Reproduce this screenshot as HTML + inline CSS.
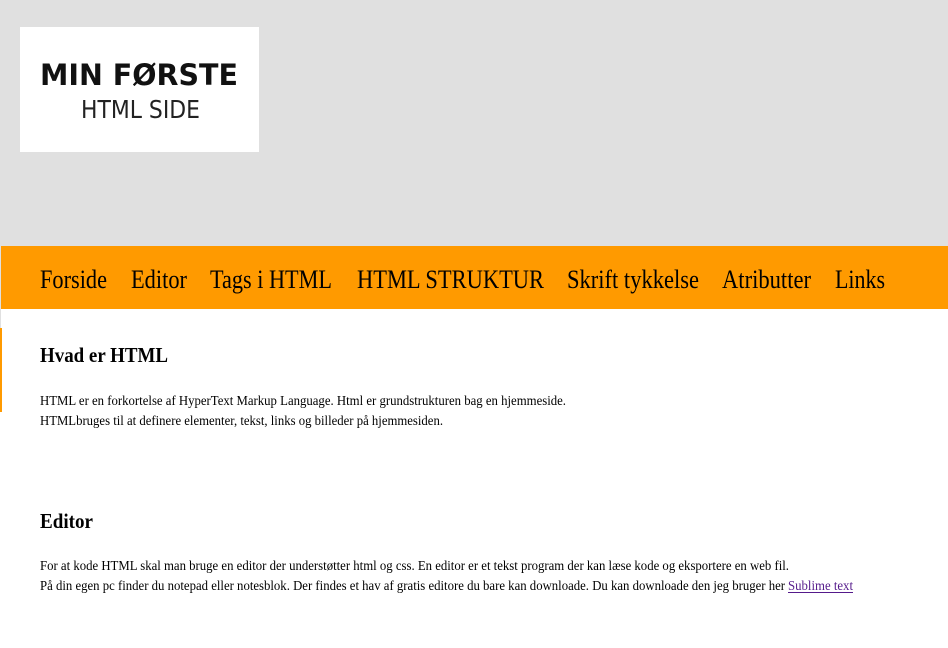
<!DOCTYPE html>
<html><head><meta charset="utf-8"><style>
html,body{margin:0;padding:0;width:948px;height:648px;overflow:hidden;background:#fff}
svg{display:block}
</style></head><body>
<svg width="948" height="648" xmlns="http://www.w3.org/2000/svg" font-family="'Liberation Serif', serif">
<rect x="0" y="0" width="948" height="246" fill="#e0e0e0"/>
<rect x="0" y="246" width="1" height="82" fill="#e0e0e0"/>
<rect x="20" y="27" width="239" height="125" fill="#fff"/>
<text x="40" y="85" font-family="'DejaVu Sans', sans-serif" font-weight="bold" font-size="29" textLength="198" lengthAdjust="spacingAndGlyphs" fill="#111">MIN FØRSTE</text>
<text x="81" y="118" font-family="'DejaVu Sans', sans-serif" font-size="25" textLength="119" lengthAdjust="spacingAndGlyphs" fill="#222">HTML SIDE</text>
<rect x="1" y="246" width="947" height="63" fill="#ff9a00"/>
<rect x="0" y="328" width="2" height="84" fill="#ff9a00"/>
<g font-size="26" fill="#000">
<text x="40" y="288" textLength="67" lengthAdjust="spacingAndGlyphs">Forside</text>
<text x="131" y="288" textLength="56" lengthAdjust="spacingAndGlyphs">Editor</text>
<text x="210" y="288" textLength="122" lengthAdjust="spacingAndGlyphs">Tags i HTML</text>
<text x="357" y="288" textLength="187" lengthAdjust="spacingAndGlyphs">HTML STRUKTUR</text>
<text x="567" y="288" textLength="132" lengthAdjust="spacingAndGlyphs">Skrift tykkelse</text>
<text x="722" y="288" textLength="89" lengthAdjust="spacingAndGlyphs">Atributter</text>
<text x="835" y="288" textLength="50" lengthAdjust="spacingAndGlyphs">Links</text>
</g>
<text x="40" y="362" font-size="21" font-weight="bold" textLength="128" lengthAdjust="spacingAndGlyphs">Hvad er HTML</text>
<g font-size="14">
<text x="40" y="405" textLength="526" lengthAdjust="spacingAndGlyphs">HTML er en forkortelse af HyperText Markup Language. Html er grundstrukturen bag en hjemmeside.</text>
<text x="40" y="425" textLength="403" lengthAdjust="spacingAndGlyphs">HTMLbruges til at definere elementer, tekst, links og billeder på hjemmesiden.</text>
</g>
<text x="40" y="528" font-size="21" font-weight="bold" textLength="53" lengthAdjust="spacingAndGlyphs">Editor</text>
<g font-size="14">
<text x="40" y="570" textLength="749" lengthAdjust="spacingAndGlyphs">For at kode HTML skal man bruge en editor der understøtter html og css. En editor er et tekst program der kan læse kode og eksportere en web fil.</text>
<text x="40" y="590" textLength="745" lengthAdjust="spacingAndGlyphs">På din egen pc finder du notepad eller notesblok. Der findes et hav af gratis editore du bare kan downloade. Du kan downloade den jeg bruger her</text>
<text x="788" y="590" fill="#551a8b" textLength="65" lengthAdjust="spacingAndGlyphs">Sublime text</text>
<rect x="788" y="592" width="65" height="1" fill="#551a8b"/>
</g>
</svg>
</body></html>
